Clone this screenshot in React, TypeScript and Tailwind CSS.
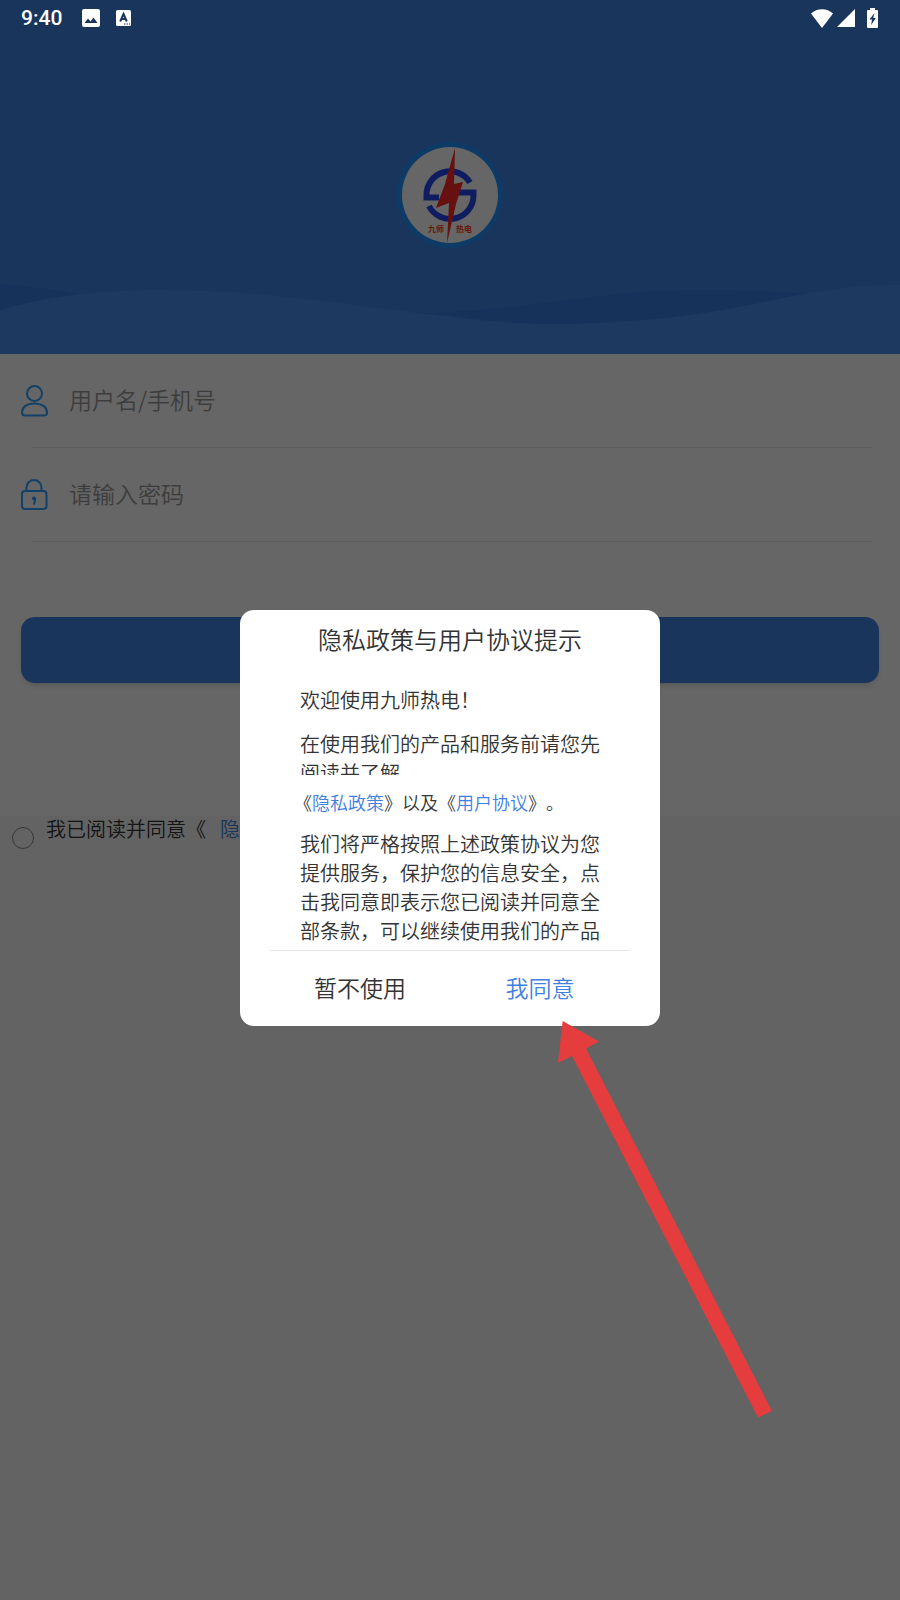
import React from 'react'

function StatusBar() {
  return (
    <div className="absolute inset-x-0 top-0 z-20 flex h-9 items-center justify-between px-[21px] text-white">
      <div className="flex items-center">
        <span className="font-[Roboto,sans-serif] text-[21px] font-medium leading-9">9:40</span>
        <svg className="ml-5 h-[18px] w-[18px]" viewBox="0 0 18 18" fill="currentColor">
          <path fillRule="evenodd" d="M2 0h14a2 2 0 0 1 2 2v14a2 2 0 0 1-2 2H2a2 2 0 0 1-2-2V2a2 2 0 0 1 2-2zM6 9.500L2.500 14h13l-4-5.500-3 4z" />
        </svg>
        <svg className="ml-4 h-4 w-4" viewBox="0 0 16 16">
          <rect width="15" height="16" rx="1.500" fill="#fff" />
          <path d="M4.200 11.500L7.500 4L10.800 11.500M5.500 9h4" fill="none" stroke="#1a355c" strokeWidth="2" />
          <path d="M8 14h1.500M10.500 14h1.500M13 14h1.200" stroke="#1a355c" strokeWidth="1.200" />
        </svg>
      </div>
      <div className="flex items-center pr-px">
        <svg className="h-[19px] w-[22px]" viewBox="0 0 22 19" fill="currentColor">
          <path d="M11 19L0 4.500C6-1.300 16-1.300 22 4.500z" />
        </svg>
        <svg className="ml-1 h-[18px] w-[18px]" viewBox="0 0 18 18" fill="currentColor">
          <path d="M18 0v18H0z" />
        </svg>
        <svg className="ml-3 h-5 w-[11px]" viewBox="0 0 11 20">
          <path d="M3 0h5v2h2a1 1 0 0 1 1 1v16a1 1 0 0 1-1 1H1a1 1 0 0 1-1-1V3a1 1 0 0 1 1-1h2z" fill="#fff" />
          <path d="M7.500 5L2.500 11.500h2.500L4.200 17l4.600-7H6.200z" fill="#1a355c" />
        </svg>
      </div>
    </div>
  )
}

function Logo() {
  return (
    <svg className="h-[106px] w-[106px]" viewBox="0 0 106 106">
      <circle cx="53" cy="53" r="53" fill="#2494ff" />
      <circle cx="53" cy="53" r="48" fill="#fff" />
      <g fill="none" stroke="#2848f0" strokeWidth="6">
        <path d="M42 55.500H29.500V53A23.500 23.500 0 0 1 73 40.500" />
        <path d="M61 50.500H76.500V53A23.500 23.500 0 0 1 32 64" />
      </g>
      <path d="M58 6L48 42L39 66L52 61L50 101L59 62L66 40L57 42z" fill="#ff2828" />
      <g fill="#ff4020" fontSize="8" fontWeight="700" fontFamily="Noto Sans CJK SC, sans-serif">
        <text x="31" y="90">九师</text>
        <text x="59" y="90">热电</text>
      </g>
    </svg>
  )
}

function Header() {
  return (
    <header className="relative flex h-[354px] justify-center bg-[#4184e6] pt-[142px]">
      <svg className="absolute inset-x-0 bottom-0 h-[74px] w-full" viewBox="0 280 900 74" preserveAspectRatio="none">
        <path d="M0 284C60 288 90 300 200 307C330 318 420 316 500 308C580 300 620 290 700 290C760 290 830 294 900 300V354H0z" fill="#377be1" />
        <path d="M0 310C40 299 85 290 160 290C280 290 380 311 450 316C490 322 520 324 560 324C640 323 700 315 760 303C820 290 850 285 900 285V354H0z" fill="#4b8ef0" />
      </svg>
      <div className="relative h-[106px]">
        <Logo />
      </div>
    </header>
  )
}

function UserIcon() {
  return (
    <svg className="h-8 w-7 shrink-0" viewBox="0 0 28 32" fill="none" stroke="#30a0ff" strokeWidth="2">
      <circle cx="13.500" cy="8.500" r="7.500" />
      <path d="M1 27.500C1 22 6 18.500 13.500 18.500S26 22 26 27.500C26 29.500 25 30.500 23 30.500H4C2 30.500 1 29.500 1 27.500z" />
    </svg>
  )
}

function LockIcon() {
  return (
    <svg className="h-8 w-7 shrink-0" viewBox="0 0 28 32" fill="none" stroke="#30a0ff" strokeWidth="2">
      <rect x="1" y="12" width="24.500" height="18" rx="3" />
      <path d="M5.500 12V8.500a7.500 7.500 0 0 1 15 0V12" />
      <circle cx="13" cy="19.500" r="2" fill="#30a0ff" stroke="none" />
      <path d="M14 19.500c.3 2-.2 4-1.200 6" />
    </svg>
  )
}

const fields = [
  { id: 'account', type: 'text', label: '用户名/手机号', icon: <UserIcon /> },
  { id: 'password', type: 'password', label: '请输入密码', icon: <LockIcon /> },
]

function LoginForm() {
  return (
    <form>
      <div className="bg-white pb-[133px]">
        {fields.map((f) => (
          <div key={f.id}>
            <div className="flex h-[93px] items-center gap-5 px-[21px]">
              <label htmlFor={f.id} aria-label={f.label}>{f.icon}</label>
              <input
                id={f.id}
                type={f.type}
                placeholder={f.label}
                className="min-w-0 flex-1 bg-transparent pb-0.5 text-[23px] font-[350] outline-none placeholder:text-[#999]"
              />
            </div>
            <div className="ml-8 mr-7 h-px bg-[#e6e6e6]" />
          </div>
        ))}
        <button type="button" aria-label="登录" className="mx-[21px] mt-[75px] block h-[66px] w-[calc(100%-42px)] rounded-[14px] bg-[#4184e6] shadow-md" />
      </div>
      <div className="flex items-start px-3 pt-px text-xl font-[350] leading-6 text-[#333]">
        <input id="agree" type="checkbox" className="mt-2.5 h-[22px] w-[22px] shrink-0 appearance-none rounded-full border border-[#888]" />
        <label htmlFor="agree" className="ml-3 [text-spacing-trim:space-all]">我已阅读并同意《</label>
        <a href="#privacy" className="ml-3.5 text-[#4184e6]">隐私政策</a>
        <span>》</span>
      </div>
    </form>
  )
}

function PrivacyDialog() {
  return (
    <div className="absolute inset-0 flex items-center justify-center bg-black/60 pt-9">
      <div role="dialog" aria-labelledby="dialog-title" className="w-[420px] rounded-[14px] bg-white pt-[11px] font-[350] text-[#333]">
        <h2 id="dialog-title" className="text-center text-2xl font-[350] leading-9">隐私政策与用户协议提示</h2>
        <div className="mx-[60px] mt-7 h-[90px] overflow-hidden text-xl leading-[29px]">
          <p>欢迎使用九师热电！</p>
          <p className="mt-[15px]">在使用我们的产品和服务前请您先阅读并了解</p>
        </div>
        <p className="mt-[13px] pl-[54px] text-lg leading-7 [text-spacing-trim:space-all]">
          《<a href="#privacy" className="text-[#4080e0]">隐私政策</a>》以及《<a href="#terms" className="text-[#4080e0]">用户协议</a>》。
        </p>
        <p className="mx-[60px] mt-[13px] text-xl leading-[29px] [text-spacing-trim:space-all]">
          我们将严格按照上述政策协议为您提供服务，保护您的信息安全，点击我同意即表示您已阅读并同意全部条款，可以继续使用我们的产品
        </p>
        <div className="mx-[30px] mt-[5px] grid grid-cols-2 border-t border-[#e6e6e6] text-[23px]">
          <button type="button" className="h-[75px] pb-0.5">暂不使用</button>
          <button type="button" className="h-[75px] pb-0.5 text-[#4080e0]">我同意</button>
        </div>
      </div>
    </div>
  )
}

function App() {
  return (
    <div className="relative min-h-screen bg-[#f8f8f8] font-['Noto_Sans_CJK_SC',sans-serif]">
      <StatusBar />
      <Header />
      <LoginForm />
      <PrivacyDialog />
      {/* pointer to the agree button */}
      <svg className="pointer-events-none absolute left-1/2 top-1/2 z-30 ml-[108px] mt-[221px] h-[397px] w-[215px]" viewBox="558 1021 215 397">
        <path d="M562.700 1021L599 1041.500L586 1048.500L772 1411L758 1417.500L572 1056L558 1062.700z" fill="#e53c3d" />
      </svg>
    </div>
  )
}

export default App
